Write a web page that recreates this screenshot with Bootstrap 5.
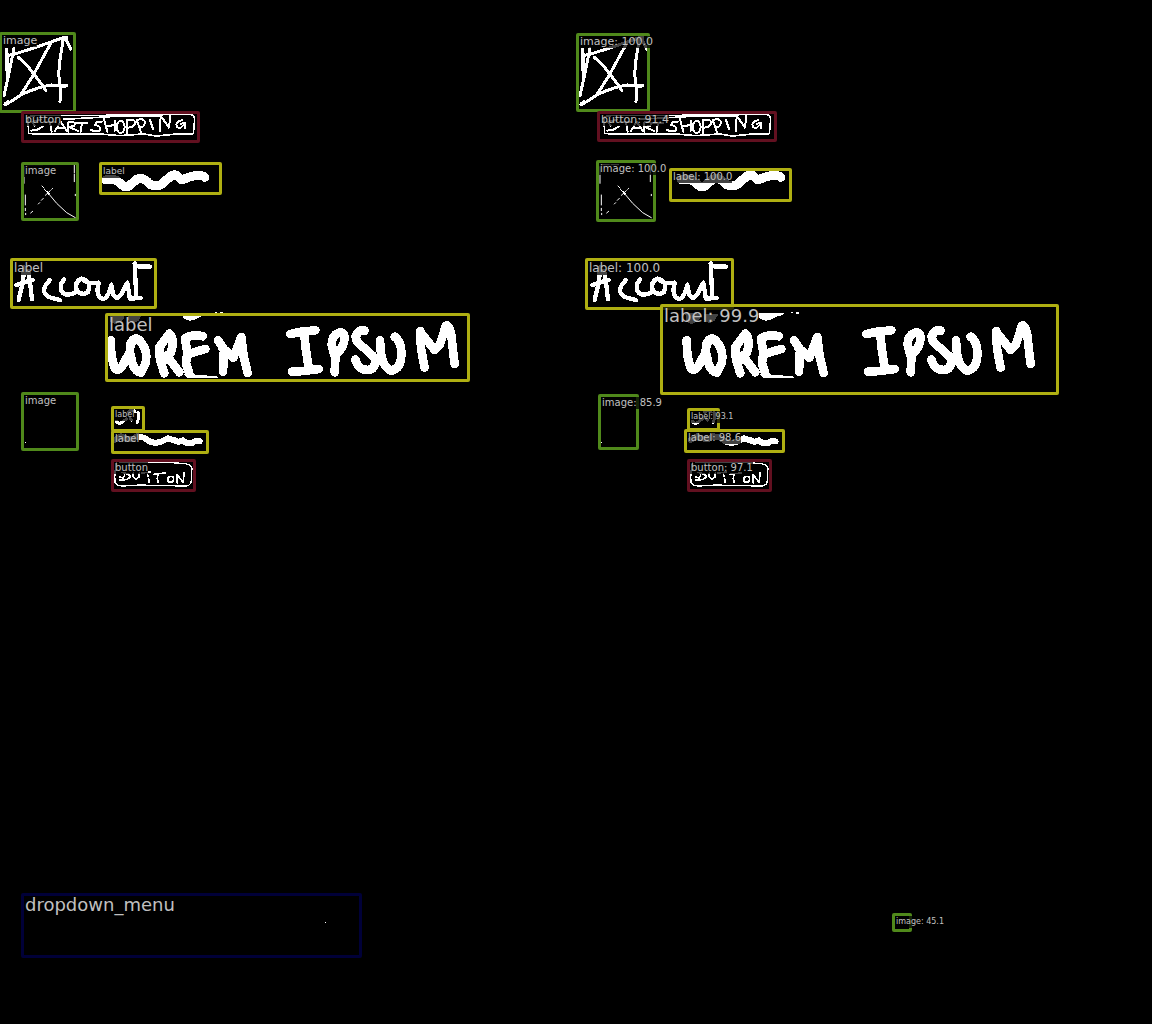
<!DOCTYPE html>
<html lang="en">
<head>
<meta charset="utf-8">
<meta name="viewport" content="width=device-width, initial-scale=1">
<title>Sketch detection</title>
<link href="https://cdn.jsdelivr.net/npm/bootstrap@5.3.0/dist/css/bootstrap.min.css" rel="stylesheet">
<style>
body{background:#000;font-family:"DejaVu Sans",sans-serif}
.sketch path,.sketch ellipse{fill:none;stroke:#fff;stroke-linecap:round;stroke-linejoin:round}
.sketch .solid{fill:#fff;stroke:none}
.sketch{shape-rendering:crispEdges}
/* annotation boxes pinned on the sketch canvas */
.bbox{position:absolute;border:3px solid;border-radius:2px}
.bbox span{position:absolute;left:0;top:0;padding-left:1px;white-space:nowrap;color:#c0c0c0;background:rgba(0,0,0,.74);font-size:10px;line-height:12px}
.bbox .t8{font-size:8px;line-height:12px}
.bbox .t9{font-size:9px;line-height:13px}
.bbox .t11{font-size:11px;line-height:12px}
.bbox .t12{font-size:12px;line-height:14px}
.bbox .t18{font-size:18px;line-height:18px}
.k-image{border-color:#50891b}
.k-label{border-color:#afaf12}
.k-button{border-color:#621020}
.k-menu{border-color:#000038}
.a1{left:-1px;top:32px;width:77px;height:81px}
.a2{left:21px;top:111px;width:179px;height:32px}
.a3{left:21px;top:162px;width:58px;height:59px}
.a4{left:99px;top:162px;width:123px;height:33px}
.a5{left:10px;top:258px;width:147px;height:51px}
.a6{left:105px;top:313px;width:365px;height:69px}
.a7{left:21px;top:392px;width:58px;height:59px}
.a8{left:111px;top:406px;width:34px;height:26px}
.a9{left:111px;top:430px;width:98px;height:24px}
.a10{left:111px;top:459px;width:85px;height:33px}
.a11{left:21px;top:893px;width:341px;height:65px}
.p1{left:0;top:33px;width:74px;height:79px}
.p2{left:21px;top:111px;width:180px;height:31px}
.p3{left:20px;top:160px;width:60px;height:62px}
.p4{left:93px;top:168px;width:123px;height:34px}
.p5{left:9px;top:258px;width:149px;height:52px}
.p6{left:84px;top:304px;width:399px;height:91px}
.p7{left:22px;top:394px;width:41px;height:56px}
.p8{left:111px;top:408px;width:33px;height:23px}
.p9{left:108px;top:429px;width:101px;height:24px}
.p10{left:111px;top:459px;width:85px;height:33px}
.p11{left:316px;top:913px;width:20px;height:19px}
</style>
</head>
<body>
<main class="container-fluid p-0 min-vh-100 overflow-hidden">
<div class="row g-0">
<section class="col-6 position-relative" aria-label="Annotated">
<svg class="sketch d-block" width="576" height="960" viewBox="0 0 576 960" aria-hidden="true">
<g id="drawing">
<g transform="translate(0 25) scale(.3333)">
<g stroke-width="9">
<path d="M19 72L20 130L24 160M42 70L30 130L12 212M20 92L48 86L110 66L195 36L212 72M190 40L179 110L176 150L182 190L180 230M155 50L130 95L100 150L62 210M55 97L80 120L102 148L125 178L138 198M15 240L40 225L65 208Q120 184 155 180L200 182"/>
<path stroke-width="12" d="M22 90L23 150M16 238L24 232M178 182H196M190 42L198 38"/>
</g>
<g stroke-width="5">
<path d="M84 282Q84 272 105 272L330 271L572 268Q584 272 584 284L580 326L520 328L470 333L430 327L360 332L300 327L86 326ZM190 283L350 274L480 274"/>
<path stroke-width="6" d="M122 284L96 290L104 302M128 305L112 314L94 317M132 291H166M150 290L155 320M165 318L182 290L200 318M170 309H197M205 320V292Q230 288 223 302L208 306L234 318M228 293H262M246 293L242 320M306 290Q288 288 285 300Q307 305 299 317Q285 322 272 314M312 282L322 320M345 287L344 318M318 304L345 300M380 328V286Q405 280 406 294Q402 308 384 308M425 328L410 285Q434 278 435 294Q432 308 418 308M450 285L459 312M480 318L482 272L507 308L511 270M547 285Q525 290 530 304Q538 314 546 305L555 295L556 310M542 297L552 293"/>
<ellipse stroke-width="6" cx="362" cy="306" rx="12" ry="18"/>
</g>
</g>
<g transform="translate(0 150) scale(.3333)">
<g stroke-width="3">
<path d="M72 50V100M76 135V165M76 175V182M77 190V194M223 45V68M223 72V95M226 133V137M126 108L132 114M133 118L145 130L170 160L200 188L226 203M158 115L155 118M151 122L136 136M130 145L124 151M119 158L115 162M98 184L92 189M78 44H100M105 44H128"/>
<path stroke-width="6" d="M143 127L146 131"/>
</g>
<path stroke-width="27" d="M316 90H348L372 109H386L410 88Q426 80 442 95Q450 107 470 108Q487 106 496 92L518 75H528L546 90Q570 78 592 76Q608 75 614 82"/>
</g>
<g transform="translate(0 250) scale(.3333)" stroke-width="13">
<path d="M72 52L69 95L56 150M84 62L90 95L96 148M49 105L75 96L98 90M149 91Q126 113 134 130Q142 142 165 146L180 150M192 88L182 104Q180 126 195 133Q214 136 230 124M244 86Q223 94 230 120Q246 140 264 126Q275 96 250 88M252 92Q270 104 296 98L292 122Q296 147 311 147Q325 143 334 104L340 135L351 145L365 132L382 98L389 142M404 40L409 145M389 146L422 144M406 48L425 50L450 50"/>
</g>
<g transform="translate(100 305) scale(.3333)">
<g stroke-width="26">
<path d="M32 106L34 150L44 190Q58 202 70 178L87 145M92 115Q105 90 121 109Q145 135 137 174L123 203Q100 200 93 155Q84 130 98 108M178 130L180 165L193 205M178 127L208 86Q226 106 212 144L191 160L211 166L238 202M255 100L262 143L258 175L268 206M256 99Q280 86 308 94M265 148Q288 139 316 132M354 106L372 133L369 200M367 128L400 158L424 96L431 155L443 204"/>
</g>
<path class="solid" d="M245 23H327L318 31L300 35L285 44L270 47L252 42ZM345 25H350V22H345ZM360 22H368V26H360ZM28 24H58L75 29L70 45L48 58L30 50ZM85 26H128L115 48L98 55L84 44ZM250 207L280 208L350 214L355 220H265Z"/>
</g>
<g transform="translate(280 305) scale(.3333)" stroke-width="26">
<path d="M31 87L65 80L106 76M73 86L77 130L86 188M36 200L72 198L116 192M164 202L166 160L155 120Q154 93 175 84Q192 78 194 98Q192 128 169 148M254 77Q237 72 227 94Q227 112 250 127L278 152Q296 170 276 192Q250 201 234 182L226 164M300 106L303 145Q310 188 334 197Q366 191 364 140Q362 107 344 95M421 78L423 130L434 188M424 85L464 135L480 118L498 62Q510 59 515 98L520 145L524 177"/>
</g>
<g transform="translate(10 385) scale(.3333)">
<path class="solid" d="M45 170H48V173H45Z"/>
<path stroke-width="9" d="M319 109Q328 121 339 109L350 102M356 82L365 73L375 80M360 99L364 105M384 82L386 100L381 112"/>
<path stroke-width="18" d="M314 165L332 154L348 160L366 163L382 154L402 158L420 170L436 174L456 169L474 160L494 166L505 171L518 166L528 173L548 173L558 167L569 169"/>
<path stroke-width="4" d="M319 233Q313 258 315 292Q322 304 340 303L390 300L450 302L530 303Q545 300 544 282L546 250Q542 236 515 235L455 231L330 232"/>
<path stroke-width="5" d="M336 262L355 268L362 275L352 283L328 286M345 262L343 275M330 276L340 280M370 264L368 274L378 282L388 275V264M396 264L422 261M412 263L414 275M416 281L418 292M431 268L466 264M444 269L442 280L445 292M502 294L501 268L520 293L522 263"/>
<ellipse stroke-width="5" cx="482" cy="283" rx="9" ry="9"/>
</g>
<path class="solid" d="M325 922h1v1h-1z"/>
</g>
</svg>
<div class="bbox k-image a1"><span class="t11">image</span></div>
<div class="bbox k-button a2"><span class="t11">button</span></div>
<div class="bbox k-image a3"><span>image</span></div>
<div class="bbox k-label a4"><span class="t9">label</span></div>
<div class="bbox k-label a5"><span class="t12">label</span></div>
<div class="bbox k-label a6"><span class="t18">label</span></div>
<div class="bbox k-image a7"><span>image</span></div>
<div class="bbox k-label a8"><span class="t8">label</span></div>
<div class="bbox k-label a9"><span>label</span></div>
<div class="bbox k-button a10"><span>button</span></div>
<div class="bbox k-menu a11"><span class="t18">dropdown_menu</span></div>
</section>
<section class="col-6 position-relative" aria-label="Predicted">
<svg class="sketch d-block" width="576" height="960" viewBox="0 0 576 960" aria-hidden="true"><use href="#drawing"/></svg>
<div class="bbox k-image p1"><span class="t11">image: 100.0</span></div>
<div class="bbox k-button p2"><span class="t11">button: 91.4</span></div>
<div class="bbox k-image p3"><span>image: 100.0</span></div>
<div class="bbox k-label p4"><span>label: 100.0</span></div>
<div class="bbox k-label p5"><span class="t12">label: 100.0</span></div>
<div class="bbox k-label p6"><span class="t18">label: 99.9</span></div>
<div class="bbox k-image p7"><span>image: 85.9</span></div>
<div class="bbox k-label p8"><span class="t8">label: 93.1</span></div>
<div class="bbox k-label p9"><span>label: 98.6</span></div>
<div class="bbox k-button p10"><span>button: 97.1</span></div>
<div class="bbox k-image p11"><span class="t8">image: 45.1</span></div>
</section>
</div>
</main>
<script src="https://cdn.jsdelivr.net/npm/bootstrap@5.3.0/dist/js/bootstrap.bundle.min.js"></script>
</body>
</html>
